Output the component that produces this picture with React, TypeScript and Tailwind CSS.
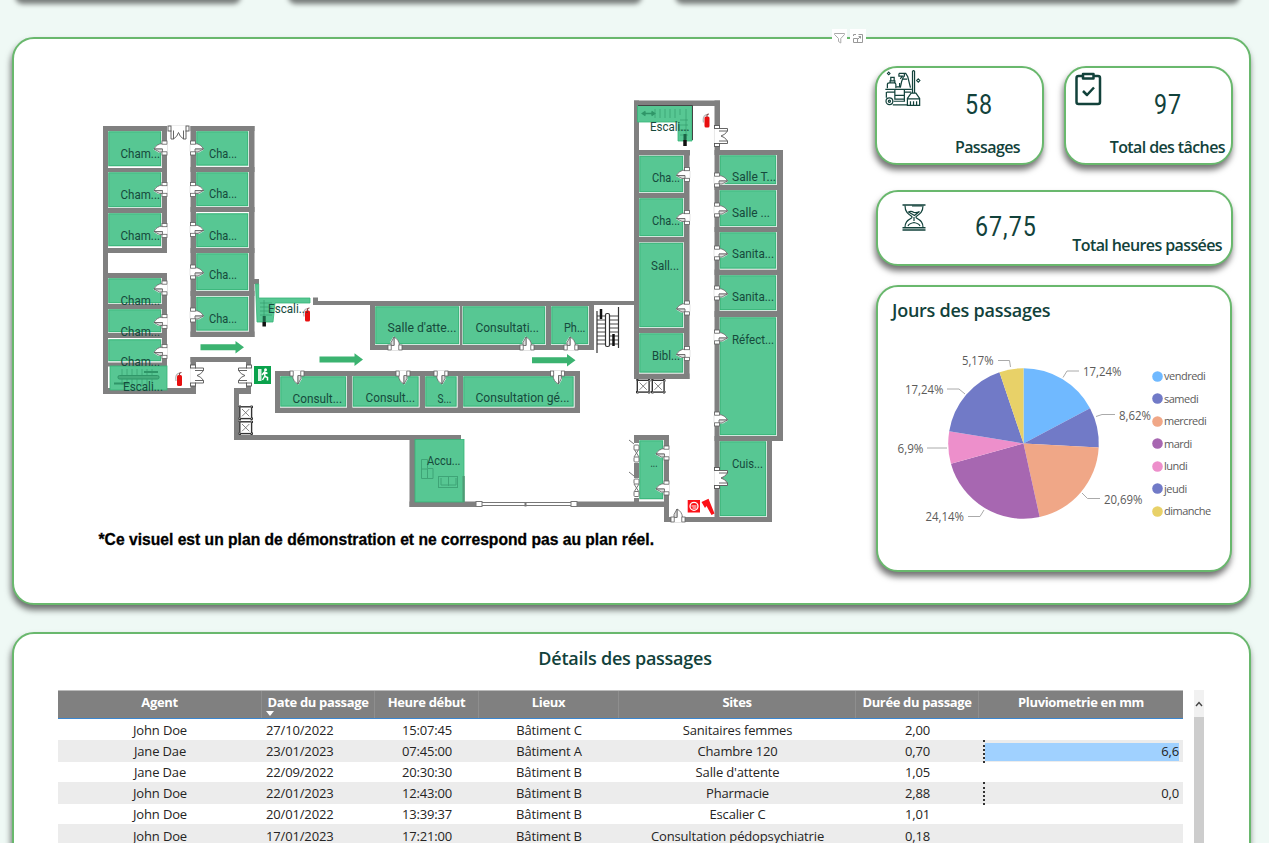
import React from "react";

type Rect = [number, number, number, number];

const WALLS: Rect[] = [
  // west wing
  [103, 126, 108, 394], [103, 126, 167, 131], [162, 126, 167, 253], [103, 168, 167, 172], [103, 208, 167, 213],
  [103, 248, 167, 253], [103, 273, 167, 278], [162, 273, 167, 366], [103, 304, 167, 309], [103, 333, 167, 338],
  [103, 362.5, 167, 366.5], [103, 388, 196, 394],
  [190.5, 126, 196, 337], [249, 126, 254.5, 337], [190.5, 126, 254.5, 131], [190.5, 167, 254.5, 172], [190.5, 207, 254.5, 212],
  [190.5, 248, 254.5, 253], [190.5, 291, 254.5, 296], [190.5, 331.5, 254.5, 337], [254, 279, 259, 284],
  // entrance hall
  [190.5, 357, 251, 362], [190.5, 357, 196, 365], [190.5, 386, 196, 394], [246, 357, 251, 365], [246, 386, 251, 394],
  [234, 388, 251, 394], [234, 388, 239, 440], [234, 435, 461, 440],
  // corridor rooms
  [313, 297.5, 318, 303], [313, 301, 636, 305], [370, 301, 375, 350], [370, 301, 594, 306], [370, 345, 594, 350],
  [459.5, 301, 462.5, 350], [545.5, 301, 551, 350], [589, 301, 594, 350],
  [275, 371, 280, 413], [275, 371, 580, 376], [275, 407.5, 580, 413], [347, 371, 352.5, 413], [419.5, 371, 425, 413],
  [457.5, 371, 463, 413], [574.5, 371, 580, 413],
  // reception front
  [409.5, 435, 415, 507], [409.5, 501.5, 478, 507], [462, 476, 464.5, 505], [577, 501.5, 668, 507],
  [634, 435, 669, 441], [634, 435, 639, 505], [664, 435, 669, 522], [664, 517, 772, 522],
  // east wing
  [634, 100.5, 720, 106], [634, 100.5, 639, 379], [714.5, 100.5, 720, 521], [634, 150, 690, 155.5], [684, 150, 689.5, 379],
  [634, 193, 689, 198], [634, 237, 689, 242.5], [634, 328, 689, 333], [634, 373.5, 689.5, 379],
  [714.5, 150, 783, 155], [777, 150, 783, 441], [714.5, 185, 783, 190], [714.5, 227, 783, 232], [714.5, 269.5, 783, 275],
  [714.5, 311, 783, 317], [714.5, 436, 783, 441], [767, 436, 772, 522],
];

const ROOMS: Rect[] = [
  [108, 131, 162, 167], [108, 172, 162, 208], [108, 213, 162, 247], [108, 278, 162, 304], [108, 309, 162, 333], [108, 339, 162, 362],
  [196, 131, 249, 166.5], [196, 172, 249, 207], [196, 213, 249, 248], [196, 253, 249, 291], [196, 296.5, 249, 331.5],
  [375, 306, 460, 345], [462.5, 306, 546, 345], [551, 306, 589, 345],
  [280, 376, 347, 407.5], [352.5, 376, 419.5, 407.5], [425, 376, 457.5, 407.5], [463, 376, 574.5, 407.5],
  [639, 155.5, 684, 193], [639, 198, 684, 237], [639, 242.5, 684, 328], [639, 333, 684, 373.5],
  [719.5, 155, 777, 185], [719.5, 190, 777, 227], [719.5, 232, 777, 269.5], [719.5, 275, 777, 311], [719.5, 317, 777, 436],
  [719.5, 441, 767, 517], [639, 440, 664, 500],
];

const LABELS: [string, number, number, number][] = [
  ["Cham...", 120.5, 158, 39.5], ["Cham...", 120.5, 199, 39.5], ["Cham...", 120.5, 240, 39.5], ["Cham...", 120.5, 305, 39.5],
  ["Cham...", 120.5, 336, 39.5], ["Cham...", 120.5, 366, 39.5], ["Escali...", 123, 391, 40],
  ["Cha...", 209, 158, 28], ["Cha...", 209, 198, 28], ["Cha...", 209, 240, 28], ["Cha...", 209, 279, 28], ["Cha...", 209, 323, 28],
  ["Escali...", 268, 313, 40], ["Salle d'atte...", 387.5, 332, 69], ["Consultati...", 475.5, 332, 63.5], ["Ph...", 564, 332, 21.5],
  ["Consult...", 292.5, 403, 49.5], ["Consult...", 365.5, 402, 49.5], ["S...", 437.5, 403, 14], ["Consultation gé...", 475.5, 402, 94],
  ["Escali...", 650, 131, 39.5], ["Cha...", 652, 182, 28], ["Cha...", 652, 225, 28], ["Sall...", 651, 270, 28], ["Bibl...", 652, 360, 28],
  ["Salle T...", 732, 181, 44], ["Salle ...", 732, 217, 38], ["Sanita...", 732, 258, 42], ["Sanita...", 732, 301, 42], ["Réfect...", 732, 344, 42],
  ["Accu...", 427, 465, 33.5], ["...", 650.5, 467, 7], ["Cuis...", 732, 468, 31],
];

// Single doors: wall-centre x, centre y, rotation, mirrored
const DOORS: [number, number, number, number][] = [
  [164.5, 148, 0, 1], [164.5, 189.5, 0, 1], [164.5, 230.5, 0, 1], [164.5, 288, 0, 1], [164.5, 321.5, 0, 1], [164.5, 351.5, 0, 1],
  [193, 148, 0, -1], [193, 189.5, 0, -1], [193, 229.5, 0, -1], [193, 272, 0, -1], [193, 315, 0, -1],
  [395, 347.5, 90, 1], [527, 347.5, 90, 1], [571, 347.5, 90, 1],
  [297, 373.5, -90, 1], [403, 373.5, -90, 1], [441, 373.5, -90, 1], [557.5, 373.5, -90, 1],
  [687, 174.5, 0, 1], [687, 217.5, 0, 1], [687, 308, 0, 1], [687, 353.5, 0, 1],
  [717, 180, 0, -1], [717, 210, 0, -1], [717, 253, 0, -1], [717, 293, 0, -1], [717, 337, 0, -1], [717, 419, 0, -1],
  [666.5, 453, 0, 1], [666.5, 488, 0, 1], [678, 519.5, 90, 1],
];

function Door({ x, y, rotate, flip }: { x: number; y: number; rotate: number; flip: number }) {
  return (
    <g transform={`translate(${x} ${y}) rotate(${rotate}) scale(${flip} 1)`} fill="#fff" stroke="#606060" strokeWidth=".8">
      <path d="M3 -4.5 H-3 Q-9 -3 -11 1.500 L-6 4.500 H3Z" stroke="none" />
      <path d="M-2 -4.5 Q-8 -4 -10.5 1 H-2" />
      <path d="M-10.500 1 H-2 V4 H-5Z" fill="#ddd" />
      <rect x="-2.5" y="-7" width="5" height="3.2" />
      <rect x="-2.5" y="3.8" width="5" height="3.2" />
      <path d="M3 -3.5V3.5" stroke="#ddd" />
    </g>
  );
}

function DoubleDoor({ x, y, rotate, flip }: { x: number; y: number; rotate: number; flip: number }) {
  return (
    <g transform={`translate(${x} ${y}) rotate(${rotate}) scale(${flip} 1)`} fill="#fff" stroke="#555" strokeWidth=".9">
      <rect x="-2.8" y="-9" width="5.6" height="18" stroke="#ddd" strokeWidth=".5" />
      <path d="M2 -7.5 H10.5 V-5 Q8 -1 4 0 Q8 1 10.5 5 V7.5 H2" stroke="none" />
      <path d="M2 -7.5 H10.5 V-5 Q8 -1 4 0 Q8 1 10.5 5 V7.5 H2" />
      <path d="M2 -5 H10.5 M2 5 H10.5" />
      <rect x="-2.5" y="-10.5" width="5" height="3" />
      <rect x="-2.5" y="7.5" width="5" height="3" />
    </g>
  );
}

function Shaft({ x, y }: { x: number; y: number }) {
  return (
    <g transform={`translate(${x} ${y})`} stroke="#333" fill="#fff">
      <rect x=".8" y=".8" width="11.8" height="11.8" strokeWidth="1.400" />
      <path d="M3 3 L10.3 10.3 M10.3 3 L3 10.3" strokeWidth=".8" stroke="#666" />
      <path d="M0 1V0H2M11.500 0H13.500V2M0 11.500V13.500H2M11.500 13.500H13.500V11.500" strokeWidth="1" />
    </g>
  );
}

function Extinguisher({ x, y }: { x: number; y: number }) {
  return (
    <g transform={`translate(${x} ${y})`}>
      <path d="M.5 9 Q-.5 3 2.5 1.5 L5 1" stroke="#b9b9b9" fill="none" strokeWidth="1.300" />
      <rect x="1.5" y="3" width="5" height="11" rx="1.500" fill="#e80f0f" />
      <path d="M4 3.500 V1 L6 .5" stroke="#844" fill="none" />
    </g>
  );
}

function Arrow({ x, y }: { x: number; y: number }) {
  return <path transform={`translate(${x} ${y})`} d="M0 3.3H35V0L43.5 6.3L35 12.6V9.2H0Z" fill="#3bb370" />;
}

function FloorPlan() {
  return (
    <svg className="block h-[563px] w-[860px] shrink-0" viewBox="15 40 860 563">
      <g fill="#808080">
        {WALLS.map(([a, b, c, d], i) => (
          <rect key={i} x={a} y={b} width={c - a} height={d - b} />
        ))}
      </g>
      {ROOMS.map(([a, b, c, d], i) => (
        <g key={i}>
          <rect x={a} y={b} width={c - a} height={d - b} fill="#e3eee8" />
          <rect x={a + 0.8} y={b + 0.8} width={c - a - 2.2} height={d - b - 2.2} fill="#57c793" stroke="#35b577" strokeWidth="1" />
        </g>
      ))}

      {/* reception */}
      <rect x="415" y="439.5" width="49" height="62.5" fill="#57c793" stroke="#35b577" strokeWidth=".8" />
      <rect x="462.5" y="476" width="2" height="26" fill="#4d9c75" />
      <g fill="none" stroke="#3fa477">
        <path d="M421.5 459.5h6v9h5.500v10h-11.500zM422 469h6M427.500 469v9" />
        <rect x="438.500" y="476.500" width="19" height="11" />
        <path d="M441 478v7h15v-7M448.500 477v9" />
      </g>

      {/* staircases */}
      <g fill="#57c793" stroke="#35b577" strokeWidth=".8">
        <rect x="110" y="366" width="57" height="24" />
        <path d="M255.500 284h3.200v14H310v5H275l-2 19H257Z" />
        <path d="M637.500 105.500H692V141H678V122H637.500Z" />
      </g>
      <g stroke="#2f9668" fill="none">
        <path d="M122 369v16M127 369v16M132 369v16M137 369v16M142 369v16M147 369v16M152 369v16" opacity=".6" />
        <rect x="118" y="375.500" width="41" height="3.500" rx="1.500" fill="#46ac7c" />
        <path d="M144 372h14M114 383.500h16" strokeWidth="2" />
        <path d="M260 303h12M260 307h12M260 311h12M260 315h12M264 300v20" opacity=".6" />
        <path d="M655 109v9M660 109v9M665 109v9M670 109v9M675 109v9M680 109v6M680 120h8M680 125h8M680 130h8M680 135h8M686 109v30" opacity=".6" />
        <path d="M644 113.500h9M645.500 111.500l-3 2 3 2M651.500 111.500l3 2-3 2" strokeWidth="1.600" />
      </g>
      <path d="M638 105.500H692.500V140" fill="none" stroke="#444" />
      <path d="M264.200 322v4.500M685 140v6" stroke="#111" strokeWidth="3.500" />
      <path d="M264.200 316v6M685 134v6" stroke="#1c6245" strokeWidth="3" />
      <g stroke="#333" fill="none">
        <path d="M597 316h21M597 320h21M597 324h21M597 328h21M597 332h21M597 336h21M597 340h21M597 344h21" strokeWidth=".9" />
        <path d="M597 311v42M618.500 307v41" strokeWidth="1.200" />
        <rect x="605.500" y="313.500" width="4" height="33" rx="1.500" fill="#fff" strokeWidth="1.200" />
        <path d="M601 309v10M613.500 334v12" strokeWidth="2.500" stroke="#111" />
      </g>

      {/* shop-front windows */}
      <g fill="#fff" stroke="#777">
        <rect x="480" y="502.500" width="92" height="3" />
        <path d="M525.500 502v4.500" strokeWidth="2" />
        <rect x="476" y="501.500" width="6" height="5" />
        <rect x="571" y="501.500" width="6" height="5" />
      </g>
      <g fill="#fff" stroke="#777">
        <rect x="633.500" y="443" width="5.500" height="20" stroke="none" />
        <rect x="633.500" y="478" width="5.500" height="20" stroke="none" />
        <path d="M629 440l5 4M629 472l5 4M634 449l5 8M639 449l-5 8M634 484l5 8M639 484l-5 8" />
        {[445, 457, 479, 491.500].map((y) => (
          <rect key={y} x="634" y={y} width="5" height="5" rx="1" />
        ))}
      </g>

      {DOORS.map(([x, y, r, f], i) => (
        <Door key={i} x={x} y={y} rotate={r} flip={f} />
      ))}
      <DoubleDoor x={178.500} y={128.500} rotate={90} flip={1} />
      <DoubleDoor x={193} y={375.500} rotate={0} flip={1} />
      <DoubleDoor x={249} y={375.500} rotate={0} flip={-1} />
      <DoubleDoor x={717} y={136} rotate={0} flip={1} />
      <DoubleDoor x={717} y={478} rotate={0} flip={1} />

      <Shaft x={239} y={406} />
      <Shaft x={239} y={421} />
      <Shaft x={636.500} y={379.500} />
      <Shaft x={651.500} y={379.500} />
      <Arrow x={200.500} y={341} />
      <Arrow x={319.500} y={353.300} />
      <Arrow x={532} y={354} />
      <Extinguisher x={175.500} y={372} />
      <Extinguisher x={303.500} y={307.500} />
      <Extinguisher x={703} y={113.500} />

      {/* emergency exit */}
      <rect x="254" y="366" width="17" height="18" fill="#0aa24c" />
      <path d="M258 369h3.500v12h-3.500z" fill="#d9f3e4" />
      <circle cx="265.500" cy="369.800" r="1.500" fill="#fff" />
      <path d="M267.500 373.500l-3-1.500-2.500 3M264.500 372.500l.5 4 2.500 1v3M264.500 376.500l-2 3.500" fill="none" stroke="#fff" strokeWidth="1.500" />
      {/* hose reel and axe */}
      <rect x="687.700" y="500" width="12.300" height="12.500" fill="#fb1118" />
      <circle cx="694" cy="506.300" r="4" fill="none" stroke="#fff" strokeWidth="1.300" />
      <path d="M691.500 506h5M692.500 508h4" stroke="#fff" />
      <path d="M701.500 502l7-3.300 6 14.800-3 1.500-5-9-1.500 2z" fill="#fb1118" />

      <g fill="#164a3c" fontFamily="Roboto, sans-serif" fontSize="12.800">
        {LABELS.map(([t, x, y, w], i) => (
          <text key={i} x={x} y={y} textLength={w} lengthAdjust="spacingAndGlyphs">
            {t}
          </text>
        ))}
      </g>
      <text x="98.500" y="545" fill="#000" stroke="#000" strokeWidth=".3" fontFamily="Liberation Sans, sans-serif" fontWeight="700" fontSize="15.800" textLength="555.500" lengthAdjust="spacingAndGlyphs">
        *Ce visuel est un plan de démonstration et ne correspond pas au plan réel.
      </text>
    </svg>
  );
}

const CARD =
  "rounded-[22px] border-2 border-[#69b86d] bg-white shadow-[-1px_5px_6px_rgba(0,0,0,0.55)]";
const SEGOE = "font-['Open_Sans','Noto_Sans',sans-serif]";

function CleaningIcon() {
  return (
    <svg className="h-[36px] w-[36px]" viewBox="0 0 104 106" fill="none" stroke="#12423b" strokeWidth="3.600">
      <circle cx="12" cy="92" r="10" />
      <circle cx="12" cy="92" r="3" />
      <path d="M0 57H78M4 65H28M56 65H76M3 65V82M22 103H64M24 92H58M28 57V86H56V57M28 75H56M56 86V92" />
      <path d="M6 54V43Q6 38 12 38H26Q31 38 31 43V54M14 37V32H28V37M16 31V22H26V31M33 50H42V38" />
      <path d="M40 10H60L66 20L74 52M40 10V18H50L44 26M54 18L48 34L44 52M52 27H64M56 10V20" />
      <path d="M80 68V4Q83 0 86 4V68M76 68H90L101 84V104H65V84ZM65 85H101M74 92V104M83 92V104M92 92V104" />
      <path d="M10 6L14 10L10 14L6 10ZM97 26L102 31L97 36L92 31Z" strokeWidth="3" />
    </svg>
  );
}

function ClipboardIcon() {
  return (
    <svg className="h-[34px] w-[27px]" viewBox="0 0 27 34" fill="none" stroke="#12423b" strokeWidth="2.500" strokeLinejoin="round">
      <path d="M8 4H3.500Q1.500 4 1.500 6V30Q1.500 32 3.500 32H23Q25 32 25 30V6Q25 4 23 4H18.500" />
      <path d="M8 2H18.500V6.500H8Z" />
      <path d="M8 19L12 23L19 15.500" />
    </svg>
  );
}

function HourglassIcon() {
  return (
    <svg className="h-[27px] w-[24px]" viewBox="0 0 24 27" fill="none" stroke="#12423b" strokeWidth="1.200">
      <path d="M.5 1H23.500M.5 23.700H23.500M.5 26H23.500" strokeWidth="1.400" />
      <path d="M3 1.500C3 8 6 10 9.500 12.200Q10.500 13 9.500 14C5 16.500 3 18.500 3 23.500M21 1.500C21 8 18 10 14.500 12.200Q13.500 13 14.500 14C19 16.500 21 18.500 21 23.500" />
      <path d="M6.500 8Q9 6.500 12 8.500Q15 9 17.500 7.500L12.500 11.500ZM12 13V17M6 22Q7 19.500 12 18.500Q17 19.500 18 22M10 2H20" />
    </svg>
  );
}

const SLICES = [
  { day: "vendredi", value: 17.24, color: "#70b9ff" },
  { day: "samedi", value: 8.62, color: "#717ac7" },
  { day: "mercredi", value: 20.69, color: "#f0a787" },
  { day: "mardi", value: 24.14, color: "#a767b1" },
  { day: "lundi", value: 6.9, color: "#ed8fcb" },
  { day: "jeudi", value: 17.24, color: "#717ac7" },
  { day: "dimanche", value: 5.17, color: "#e8d168" },
];

const PIE_LABELS: [string, number, number, number][] = [
  ["17,24%", 1083, 376, 38.500],
  ["8,62%", 1119, 420, 32],
  ["20,69%", 1104, 504, 38.500],
  ["24,14%", 925.500, 521, 38.500],
  ["6,9%", 897.500, 453, 26],
  ["17,24%", 905, 394, 38.500],
  ["5,17%", 962, 365, 31.500],
];

function Pie() {
  const cx = 1023.500;
  const cy = 443.500;
  const r = 75.300;
  let sum = 0;
  const at = (v: number) => {
    const a = (v / 100) * Math.PI * 2;
    return `${cx + r * Math.sin(a)} ${cy - r * Math.cos(a)}`;
  };
  return (
    <svg className="h-[200px] w-[274px] shrink-0" viewBox="878 340 274 200">
      {SLICES.map((s) => {
        const from = sum;
        sum += s.value;
        return <path key={s.day} d={`M${cx} ${cy}L${at(from)}A${r} ${r} 0 0 1 ${at(sum)}Z`} fill={s.color} />;
      })}
      <path
        d="M1063 377.500L1067 371H1079M1096 416.500L1102 414.500H1115M1082 493L1087.500 498.500H1100M984 510L980 516.500H968M947 448H927M965 394L959 389H947M1010.500 367L1009.500 360.500H998"
        fill="none"
        stroke="#aaa"
      />
      <g fill="#5c5b5a" fontFamily="Open Sans, sans-serif" fontSize="12">
        {PIE_LABELS.map(([t, x, y, w], i) => (
          <text key={i} x={x} y={y} textLength={w} lengthAdjust="spacingAndGlyphs">
            {t}
          </text>
        ))}
      </g>
    </svg>
  );
}

const COLUMNS = ["Agent", "Date du passage", "Heure début", "Lieux", "Sites", "Durée du passage", "Pluviometrie en mm"];
const ROWS = [
  ["John Doe", "27/10/2022", "15:07:45", "Bâtiment C", "Sanitaires femmes", "2,00", ""],
  ["Jane Dae", "23/01/2023", "07:45:00", "Bâtiment A", "Chambre 120", "0,70", "6,6"],
  ["Jane Dae", "22/09/2022", "20:30:30", "Bâtiment B", "Salle d'attente", "1,05", ""],
  ["John Doe", "22/01/2023", "12:43:00", "Bâtiment B", "Pharmacie", "2,88", "0,0"],
  ["John Doe", "20/01/2022", "13:39:37", "Bâtiment B", "Escalier C", "1,01", ""],
  ["John Doe", "17/01/2023", "17:21:00", "Bâtiment B", "Consultation pédopsychiatrie", "0,18", ""],
];
const GRID = "grid grid-cols-[204px_113px_104px_140px_237px_123px_204px]";

function Details() {
  return (
    <div className={`w-[1125px] ${SEGOE}`}>
      <div className={`${GRID} h-[29px] border-t border-b border-t-[#bbb] border-b-[#3b86cf] bg-[#808080] text-[13px] font-bold leading-[22px] tracking-[-0.35px] text-white`}>
        {COLUMNS.map((c, i) => (
          <div key={c} className={`relative whitespace-nowrap text-center ${i < 6 ? "border-r border-[#8e8e8e]" : ""}`}>
            {c}
            {i === 1 && (
              <span className="absolute bottom-[2px] left-[4px] h-0 w-0 border-x-[4.5px] border-t-[5px] border-x-transparent border-t-white" />
            )}
          </div>
        ))}
      </div>
      {ROWS.map((row, r) => (
        <div
          key={r}
          className={`${GRID} text-[13px] tracking-[-0.15px] text-[#252423] ${
            r === 5
              ? "h-[22px] bg-[#ececec] leading-[25px]"
              : r % 2
                ? "h-[22px] bg-[#ececec] leading-[23px]"
                : r === 0
                  ? "h-[21px] bg-white leading-[23px]"
                  : "h-[20px] bg-white leading-[21px]"
          }`}
        >
          {row.map((cell, i) =>
            i === 6 ? (
              <div key={i} className="flex items-center pl-[4px]">
                {cell && (
                  <>
                    <span className="h-full w-0 border-l-2 border-dotted border-[#333]" />
                    <span className={`flex h-[18px] w-[194px] items-center justify-end ${cell === "6,6" ? "bg-[#a0d1ff]" : ""}`}>{cell}</span>
                  </>
                )}
              </div>
            ) : (
              <div key={i} className={`whitespace-nowrap ${i === 1 ? "pl-[4px]" : "text-center"}`}>
                {cell}
              </div>
            )
          )}
        </div>
      ))}
    </div>
  );
}

export default function App() {
  return (
    <div className="h-[843px] w-[1269px] overflow-hidden bg-[#eff9f5]">
      <div className="-mt-10 flex h-10 pl-[15px]">
        <div className="mr-[47px] w-[226px] rounded-b-[8px] shadow-[0_4px_5px_rgba(0,0,0,0.5)]" />
        <div className="mr-[33px] w-[354px] rounded-b-[8px] shadow-[0_4px_5px_rgba(0,0,0,0.5)]" />
        <div className="w-[565px] rounded-b-[8px] shadow-[0_4px_5px_rgba(0,0,0,0.5)]" />
      </div>

      <section className={`relative ml-[12px] mt-[37px] flex h-[568px] w-[1239px] pl-[1px] pt-[1px] ${CARD}`}>
        <div className="absolute left-[818px] top-[-10px] flex h-[17px] items-center gap-[3px]">
          <svg className="h-[17px] w-[15px] bg-white" viewBox="0 0 15 17" fill="none" stroke="#aaa">
            <path d="M2.500 4.500H12.500V5.500L8.800 9.500V14L6.500 12.500V9.500L2.500 5.500Z" />
          </svg>
          <svg className="h-[17px] w-[16px] bg-white" viewBox="0 0 16 17" fill="none" stroke="#999">
            <path d="M3.500 7V5.500H6M8.500 5.500H12.500V13.500H3.500V9.500H7.500V13M8 10L11 7M8.500 7.500H10.500V9.500" />
          </svg>
        </div>

        <FloorPlan />

        <div className="flex w-[358px] shrink-0 flex-col pt-[26px]">
          <div className="flex gap-[20px]">
            <div className={`flex h-[99px] w-[169px] flex-col justify-between ${CARD}`}>
              <div className="flex h-[64px]">
                <div className="pl-[8px] pt-[2px]">
                  <CleaningIcon />
                </div>
                <div className="ml-[44px] mt-[19px] origin-left scale-x-[0.83] font-[Roboto,sans-serif] text-[28px] leading-[36px] tracking-[1.2px] text-[#12423b]">58</div>
              </div>
              <div className={`pr-[22px] text-right text-[16px] font-semibold leading-[32px] tracking-[-0.6px] text-[#12423b] ${SEGOE}`}>Passages</div>
            </div>
            <div className={`flex h-[99px] w-[169px] flex-col justify-between ${CARD}`}>
              <div className="flex h-[64px]">
                <div className="pl-[9px] pt-[4px]">
                  <ClipboardIcon />
                </div>
                <div className="ml-[52px] mt-[19px] origin-left scale-x-[0.83] font-[Roboto,sans-serif] text-[28px] leading-[36px] tracking-[1.2px] text-[#12423b]">97</div>
              </div>
              <div className={`whitespace-nowrap pr-[6px] text-right text-[16px] font-semibold leading-[32px] tracking-[-0.6px] text-[#12423b] ${SEGOE}`}>Total des tâches</div>
            </div>
          </div>

          <div className={`ml-[1px] mt-[25px] flex h-[76px] w-[357px] ${CARD}`}>
            <div className="pl-[24px] pt-[12px]">
              <HourglassIcon />
            </div>
            <div className="ml-[49px] mt-[17px] w-[62px] origin-left scale-x-[0.83] font-[Roboto,sans-serif] text-[28px] leading-[36px] tracking-[1.2px] text-[#12423b]">67,75</div>
            <div className={`ml-auto mt-[37px] whitespace-nowrap pr-[9px] text-[16px] font-semibold leading-[32px] tracking-[-0.6px] text-[#12423b] ${SEGOE}`}>
              Total heures passées
            </div>
          </div>

          <div className={`ml-[1px] mt-[19px] h-[287px] w-[356px] ${CARD}`}>
            <h2 className={`h-[53px] pl-[14px] pt-[9px] text-[18px] font-semibold leading-[28px] tracking-[-0.25px] text-[#12423b] ${SEGOE}`}>Jours des passages</h2>
            <div className="flex">
              <Pie />
              <ul className={`pt-[25px] text-[11px] tracking-[-0.5px] text-[#5c5b5a] ${SEGOE}`}>
                {SLICES.map((s) => (
                  <li key={s.day} className="flex h-[22.5px] items-center gap-[1px]">
                    <svg className="h-[11px] w-[11px]" viewBox="0 0 11 11">
                      <circle cx="5.500" cy="5.500" r="5.300" fill={s.color} />
                    </svg>
                    {s.day}
                  </li>
                ))}
              </ul>
            </div>
          </div>
        </div>
      </section>

      <section className={`ml-[12px] mt-[27px] h-[300px] w-[1239px] ${CARD}`}>
        <h2 className={`h-[56px] pt-[10px] text-center text-[18px] font-semibold leading-[28px] tracking-[-0.25px] text-[#12423b] ${SEGOE}`}>
          <span className="mr-[13px]">Détails des passages</span>
        </h2>
        <div className="flex pl-[44px]">
          <Details />
          <div className="ml-[11px] h-[240px] w-[10px] bg-[#cdcdcd]">
            <div className="flex h-[27px] items-center justify-center bg-[#f1f1f1]">
              <svg className="h-[6px] w-[8px]" viewBox="0 0 8 6" fill="none" stroke="#444" strokeWidth="1.400">
                <path d="M1 5L4 1.500L7 5" />
              </svg>
            </div>
          </div>
        </div>
      </section>
    </div>
  );
}
